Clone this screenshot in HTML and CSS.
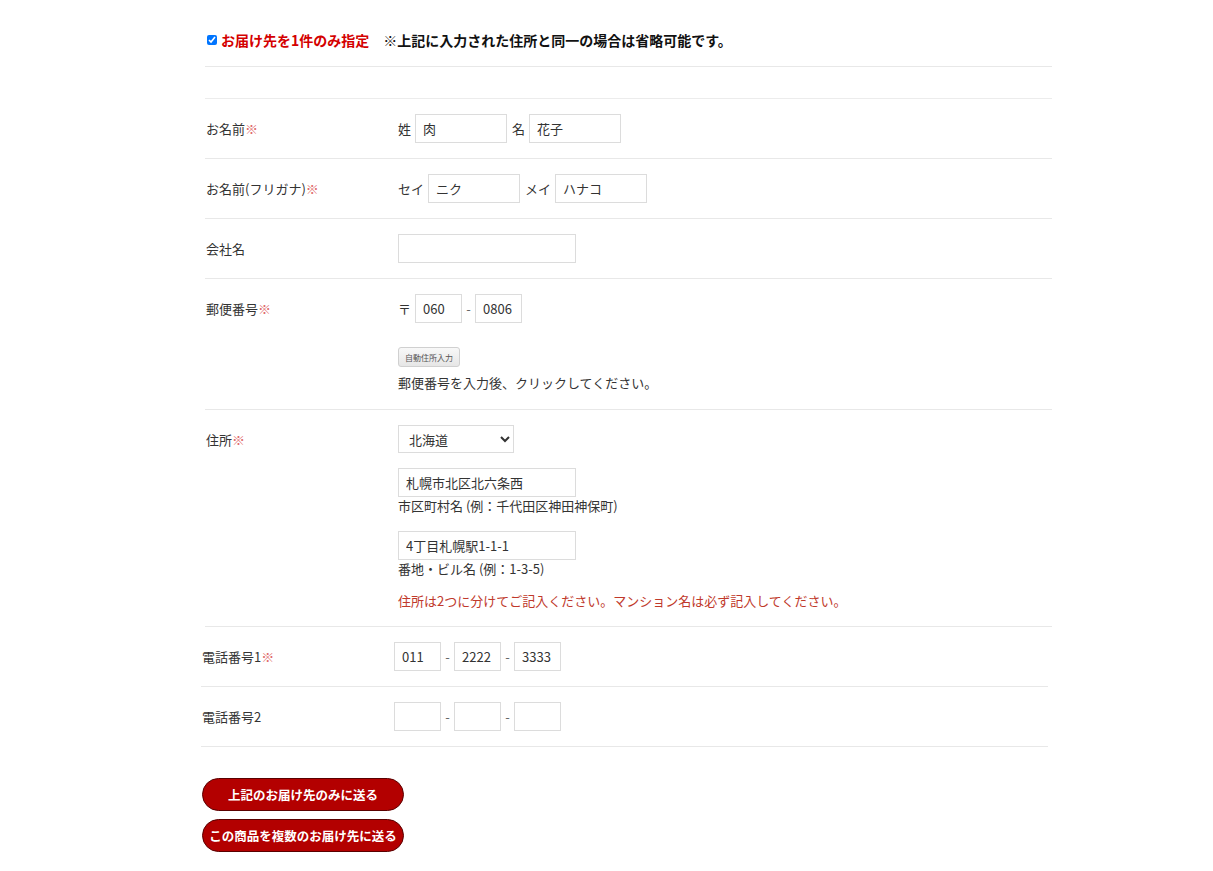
FILE: index.html
```html
<!DOCTYPE html>
<html lang="ja">
<head>
  <meta charset="UTF-8" />
  <meta name="viewport" content="width=device-width, initial-scale=1.0"/>
  <title>お届け先の指定</title>
  <link rel="stylesheet" href="styles.css">
</head>
<body>

  <div class="wrap">

    <div class="single-dest">
      <label class="single-check">
        <input type="checkbox" checked />
        <span class="single-label">お届け先を1件のみ指定</span>
      </label>
      <span class="single-note">※上記に入力された住所と同一の場合は省略可能です。</span>
    </div>
    <div class="spacer"></div>

    <div class="form-table">
      <div class="row">
        <div class="label">お名前<span class="req">※</span></div>
        <div class="field">
          <span class="pre">姓</span><input type="text" class="in-name" value="肉" />
          <span class="pre">名</span><input type="text" class="in-name" value="花子" />
        </div>
      </div>

      <div class="row">
        <div class="label">お名前(フリガナ)<span class="req">※</span></div>
        <div class="field">
          <span class="pre">セイ</span><input type="text" class="in-name" value="ニク" />
          <span class="pre">メイ</span><input type="text" class="in-name" value="ハナコ" />
        </div>
      </div>

      <div class="row">
        <div class="label">会社名</div>
        <div class="field">
          <input type="text" class="in-wide" value="" />
        </div>
      </div>

      <div class="row">
        <div class="label">郵便番号<span class="req">※</span></div>
        <div class="field">
          <div>
            <span class="pre">〒</span><input type="text" class="in-short" value="060" /><span class="dash">-</span><input type="text" class="in-short" value="0806" />
          </div>
          <button type="button" class="zip-btn">自動住所入力</button>
          <p class="hint">郵便番号を入力後、クリックしてください。</p>
        </div>
      </div>

      <div class="row">
        <div class="label">住所<span class="req">※</span></div>
        <div class="field">
          <select class="pref">
            <option>北海道</option>
            <option>青森県</option>
            <option>東京都</option>
          </select>
          <div class="addr">
            <input type="text" class="in-wide" value="札幌市北区北六条西" />
            <p class="sub">市区町村名 (例：千代田区神田神保町)</p>
          </div>
          <div class="addr">
            <input type="text" class="in-wide" value="4丁目札幌駅1-1-1" />
            <p class="sub">番地・ビル名 (例：1-3-5)</p>
          </div>
          <p class="warn">住所は2つに分けてご記入ください。マンション名は必ず記入してください。</p>
        </div>
      </div>
    </div>

    <div class="form-table tel-table">
      <div class="row">
        <div class="label">電話番号1<span class="req">※</span></div>
        <div class="field">
          <input type="text" class="in-short" value="011" /><span class="dash">-</span><input type="text" class="in-short" value="2222" /><span class="dash">-</span><input type="text" class="in-short" value="3333" />
        </div>
      </div>

      <div class="row">
        <div class="label">電話番号2</div>
        <div class="field">
          <input type="text" class="in-short" value="" /><span class="dash">-</span><input type="text" class="in-short" value="" /><span class="dash">-</span><input type="text" class="in-short" value="" />
        </div>
      </div>
    </div>

    <div class="actions">
      <button type="button" class="send-btn">上記のお届け先のみに送る</button>
      <button type="button" class="send-btn">この商品を複数のお届け先に送る</button>
    </div>

  </div>

</body>
</html>
```

FILE: styles.css
```css
body {
  margin: 0;
  background-color: #fff;
  color: #333;
  font-family: "Noto Sans CJK JP", "Noto Sans", sans-serif;
  font-size: 13px;
}
.wrap {
  width: 847px;
  margin-left: 205px;
  padding-bottom: 18px;
}
.single-dest {
  display: flex;
  align-items: center;
  padding: 30px 0 16px 1px;
  line-height: 20px;
  border-bottom: 1px solid #e8e8e8;
  font-weight: bold;
  font-size: 14px;
}
.single-check {
  display: flex;
  align-items: center;
}
.single-check input {
  width: 10px;
  height: 10px;
  margin: 0 4px 0 1px;
}
.single-label {
  color: #d40000;
}
.single-note {
  color: #111;
  margin-left: 14px;
}
.spacer {
  height: 31px;
  border-bottom: 1px solid #ececec;
}
.row {
  display: flex;
  padding: 15px 0 15px 1px;
  border-bottom: 1px solid #e8e8e8;
}
.label {
  width: 192px;
  flex-shrink: 0;
  line-height: 29px;
}
.req {
  color: #e06a6a;
}
.field {
  line-height: 29px;
}
input[type="text"] {
  height: 29px;
  box-sizing: border-box;
  border: 1px solid #dcdcdc;
  padding: 0 7px;
  font-family: inherit;
  font-size: 13px;
  color: #333;
  vertical-align: top;
  margin: 0;
}
.in-name {
  width: 92px;
}
.in-wide {
  width: 178px;
}
.in-short {
  width: 47px;
}
.pre {
  display: inline-block;
  margin-right: 4px;
}
.in-name + .pre {
  margin-left: 2px;
}
.dash {
  display: inline-block;
  width: 13px;
  text-align: center;
  color: #666;
}
.zip-btn {
  display: block;
  margin-top: 24px;
  height: 20px;
  padding: 0 6px;
  font-family: inherit;
  font-size: 8px;
  color: #555;
  background: linear-gradient(#f8f8f8, #e6e6e6);
  border: 1px solid #d0d0d0;
  border-radius: 3px;
}
.hint {
  margin: 5px 0 0;
  line-height: 22px;
}
.pref {
  display: block;
  width: 116px;
  height: 28px;
  border: 1px solid #dcdcdc;
  padding: 0 6px;
  font-family: inherit;
  font-size: 13px;
  color: #333;
  background: #fff;
}
.addr {
  margin-top: 15px;
}
.addr + .addr {
  margin-top: 16px;
}
.sub {
  margin: 0;
  line-height: 18px;
}
.warn {
  margin: 13px 0 0;
  line-height: 20px;
  color: #c0392b;
}
.tel-table {
  margin: 0 4px 0 -4px;
}
.actions {
  display: flex;
  flex-direction: column;
  align-items: flex-start;
  gap: 8px;
  margin: 31px 0 0 -3px;
}
.send-btn {
  width: 202px;
  height: 33px;
  border-radius: 17px;
  border: 1px solid #5a0000;
  background-color: #b30000;
  color: #fff;
  font-family: inherit;
  font-weight: bold;
  font-size: 12.5px;
  cursor: pointer;
}
```
